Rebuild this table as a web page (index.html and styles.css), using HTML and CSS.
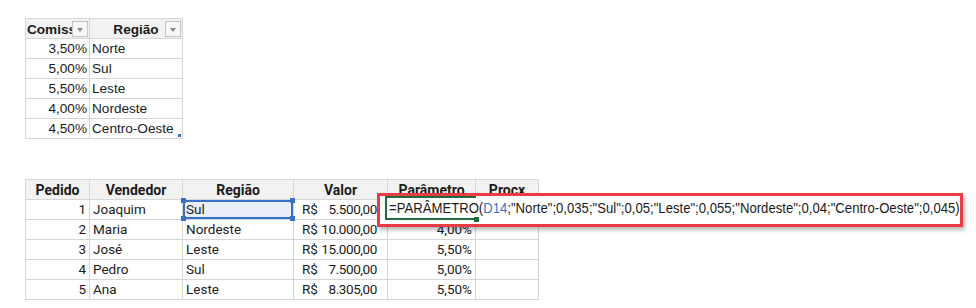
FILE: index.html
```html
<!DOCTYPE html>
<html lang="pt-BR">
<head>
<meta charset="utf-8">
<title>Planilha</title>
<link rel="stylesheet" href="styles.css">
</head>
<body>
<div class="sheet">
  <table class="grid t1">
    <colgroup><col class="w64"><col class="w93"></colgroup>
    <thead>
      <tr>
        <th class="hleft"><span class="clip">Comissão</span><span class="dd"></span></th>
        <th class="hcenter"><span>Região</span><span class="dd"></span></th>
      </tr>
    </thead>
    <tbody>
      <tr><td class="num">3,50%</td><td>Norte</td></tr>
      <tr><td class="num">5,00%</td><td>Sul</td></tr>
      <tr><td class="num">5,50%</td><td>Leste</td></tr>
      <tr><td class="num">4,00%</td><td>Nordeste</td></tr>
      <tr><td class="num">4,50%</td><td class="last">Centro-Oeste<span class="resize"></span></td></tr>
    </tbody>
  </table>

  <div class="lower">
    <table class="grid t2">
      <colgroup><col class="w64"><col class="w93"><col class="w111"><col class="w94"><col class="w88"><col class="w63"></colgroup>
      <thead>
        <tr><th>Pedido</th><th>Vendedor</th><th>Região</th><th>Valor</th><th>Parâmetro</th><th>Procx</th></tr>
      </thead>
      <tbody>
        <tr><td class="num">1</td><td>Joaquim</td><td class="sel">Sul<span class="h tl"></span><span class="h tr"></span><span class="h bl"></span><span class="h br"></span></td><td class="acc"><div class="accin"><span>R$</span><span class="amt">5.500,00</span></div></td><td class="num"></td><td></td></tr>
        <tr><td class="num">2</td><td>Maria</td><td>Nordeste</td><td class="acc"><div class="accin"><span>R$</span><span class="amt">10.000,00</span></div></td><td class="num">4,00%</td><td></td></tr>
        <tr><td class="num">3</td><td>José</td><td>Leste</td><td class="acc"><div class="accin"><span>R$</span><span class="amt">15.000,00</span></div></td><td class="num">5,50%</td><td></td></tr>
        <tr><td class="num">4</td><td>Pedro</td><td>Sul</td><td class="acc"><div class="accin"><span>R$</span><span class="amt">7.500,00</span></div></td><td class="num">5,00%</td><td></td></tr>
        <tr><td class="num">5</td><td>Ana</td><td>Leste</td><td class="acc"><div class="accin"><span>R$</span><span class="amt">8.305,00</span></div></td><td class="num">5,50%</td><td></td></tr>
      </tbody>
    </table>

    <div class="callout">
      <div class="editor">
        <span class="cellframe"><span class="fill"></span></span>
        <span class="ftext">=PARÂMETRO(<span class="ref">D14</span>;"Norte";0,035;"Sul";0,05;"Leste";0,055;"Nordeste";0,04;"Centro-Oeste";0,045)</span>
      </div>
    </div>
  </div>
</div>
</body>
</html>
```

FILE: styles.css
```css
* { box-sizing: border-box; }
html, body { margin: 0; padding: 0; background: #ffffff; }
body { width: 976px; height: 308px; overflow: hidden; color: #1b1b1b; }

.sheet { padding: 18px 0 0 25px; }

.grid {
  border-collapse: collapse;
  table-layout: fixed;
}
.grid th, .grid td {
  border: 1px solid #d6d6d6;
  height: 20px;
  padding: 0 3px;
  white-space: nowrap;
  overflow: hidden;
  position: relative;
  vertical-align: bottom;
}
.grid thead th { background: #f2f2f2; }

.w64 { width: 64px; }
.w93 { width: 93px; }
.w111 { width: 111px; }
.w94 { width: 94px; }
.w88 { width: 88px; }
.w63 { width: 63px; }

/* Top table: Arial-like */
.t1 { width: 158px; font-family: "Liberation Sans", Arial, sans-serif; font-size: 13.6px; line-height: 17px; }
.t1 th { font-weight: bold; text-align: center; padding: 0 1px; }
.t1 th.hleft { text-align: left; }
.t1 td { padding: 0 2px 1px 2px; }
.t1 td.num { text-align: right; padding: 0 2px 1px 2px; }
.clip { display: block; overflow: hidden; }

.dd {
  position: absolute;
  right: 1px;
  top: 2px;
  width: 16px;
  height: 16px;
  border: 1px solid #c4c4c4;
  background: #f7f7f7;
}
.dd::after {
  content: "";
  position: absolute;
  left: 4px;
  top: 6px;
  border-left: 3.5px solid transparent;
  border-right: 3.5px solid transparent;
  border-top: 4px solid #8a8a8a;
}
.t1 td.last { overflow: visible; }
.resize {
  position: absolute;
  right: 1px;
  bottom: 1px;
  width: 3px;
  height: 3px;
  background: #3d6fc4;
}

/* Lower table */
.lower { position: relative; margin-top: 40px; }
.t2 { width: 514px; font-family: Roboto, "Noto Sans", sans-serif; font-size: 13.5px; line-height: 18px; }
.t2 th { font-weight: bold; text-align: center; font-size: 14px; }
.t2 td { padding: 0 3px 1px 3px; }
.t2 td.num { text-align: right; padding: 0 3px 1px 3px; }
.t2 td.acc { padding: 0 10px 1px 8px; }
.accin { display: flex; justify-content: space-between; }
.amt { letter-spacing: -0.4px; }

.t2 td.sel {
  background: #e9eef8;
  overflow: visible;
  box-shadow: inset 0 0 0 2px #3a6fc6;
}
.h {
  position: absolute;
  width: 5px;
  height: 5px;
  background: #3a6fc6;
}
.h.tl { left: -2px; top: -2px; }
.h.tr { right: -2px; top: -2px; }
.h.bl { left: -2px; bottom: -2px; }
.h.br { right: -2px; bottom: -2px; }

/* Formula callout */
.callout {
  position: absolute;
  left: 352px;
  top: 14px;
  width: 586px;
  height: 34px;
  border: 3px solid #ea3c42;
  background: #ffffff;
  box-shadow: 2px 3px 4px rgba(0, 0, 0, 0.28);
}
.editor {
  position: relative;
  height: 100%;
  padding: 0 0 0 9px;
  display: flex;
  align-items: center;
}
.cellframe {
  position: absolute;
  left: 5px;
  top: 0px;
  width: 91px;
  height: 24px;
  border: 2px solid #1f6b3f;
  border-right: none;
}
.fill {
  position: absolute;
  right: -3px;
  bottom: -4px;
  width: 5px;
  height: 5px;
  background: #1f6b3f;
}
.ftext {
  position: relative;
  font-family: "Liberation Sans", Arial, sans-serif;
  font-size: 15.5px;
  color: #1b1b1b;
  white-space: nowrap;
  margin-top: -4px;
  display: inline-block;
  transform: scaleX(0.847);
  transform-origin: left center;
}
.ref { color: #3b72c7; }
```
